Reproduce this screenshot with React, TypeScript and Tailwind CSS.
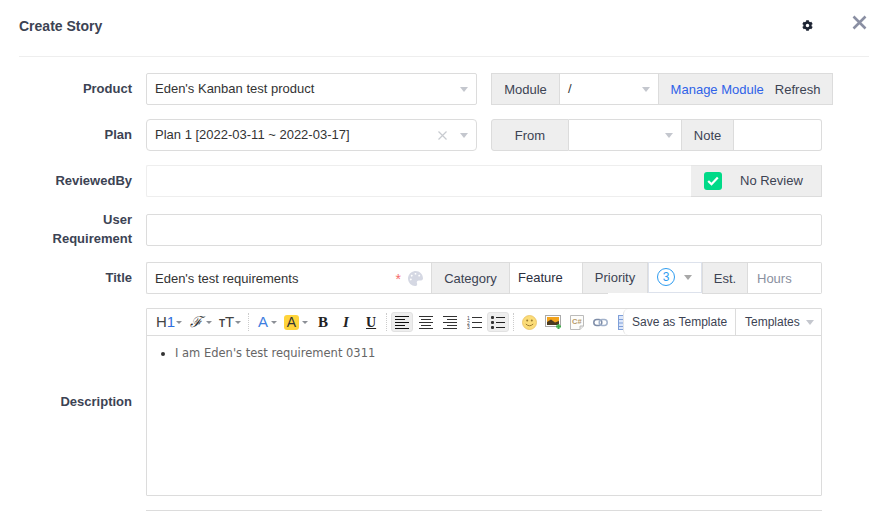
import React from "react";
import { FaCog, FaPalette } from "react-icons/fa";

function Caret({ className = "border-t-[#c4c7ce]" }: { className?: string }) {
  return <span className={"inline-block w-0 h-0 border-l-[4px] border-r-[4px] border-t-[5px] border-l-transparent border-r-transparent " + className} />;
}

function Mini() {
  return <span className="inline-block w-0 h-0 ml-[1px] mt-[1px] border-l-[3px] border-r-[3px] border-t-[3px] border-l-transparent border-r-transparent border-t-[#8b8f96]" />;
}

function Label({ children }: { children: React.ReactNode }) {
  return (
    <div className="w-[113px] mr-[14px] shrink-0 text-right font-bold text-[13px] leading-[19px] text-[#3c4353] pb-[2px]">
      {children}
    </div>
  );
}

function Addon({ className = "", children }: { className?: string; children: React.ReactNode }) {
  return (
    <div className={"flex items-center justify-center h-full pt-[2px] bg-[#eeeeee] border border-[#dcdcdc] text-[13px] text-[#3c4353] shrink-0 " + className}>
      {children}
    </div>
  );
}

function Row({ className = "", children }: { className?: string; children: React.ReactNode }) {
  return <div className={"flex items-center " + className}>{children}</div>;
}

function Lines({ kind }: { kind: "left" | "center" | "right" }) {
  const rows = [14, 10, 14, 10, 14];
  return (
    <svg width="14" height="13" viewBox="0 0 14 13">
      {rows.map((w, i) => {
        const x = kind === "left" ? 0 : kind === "center" ? (14 - w) / 2 : 14 - w;
        return <rect key={i} x={x} y={i * 3} width={w} height="1" fill={kind === "left" ? "#111" : "#333"} />;
      })}
    </svg>
  );
}

function Toolbar() {
  return (
    <div className="flex items-center h-[27px] border-b border-[#dcdcdc]">
      <div className="flex-1 min-w-0 h-full overflow-hidden flex items-center pl-[9px] text-[#444]">
        <div className="w-[34px] shrink-0 flex items-center text-[15px]">
          <span>H</span><span className="text-[#2f6fde]">1</span><Mini />
        </div>
        <div className="w-[29px] shrink-0 flex items-center">
          <span className="font-['Liberation_Serif',serif] italic text-[15px] text-[#333]">ℱ</span>
          <span className="ml-[3px] flex"><Mini /></span>
        </div>
        <div className="w-[29px] shrink-0 flex items-center font-bold text-[#444]">
          <span className="text-[10px] mt-[2px]">T</span><span className="text-[15px] font-normal">T</span><Mini />
        </div>
        <div className="w-px h-[18px] shrink-0 border-l border-dotted border-[#ccc]" />
        <div className="w-[26px] ml-[9px] shrink-0 flex items-center text-[15px] text-[#3d7ee0]">
          <span>A</span><span className="ml-[2px] flex"><Mini /></span>
        </div>
        <div className="w-[34px] shrink-0 flex items-center">
          <span className="w-[15px] h-[15px] shrink-0 rounded-[3px] bg-[#ffd43b] flex items-center justify-center text-[14px] text-[#333]">A</span>
          <span className="ml-[2px] flex"><Mini /></span>
        </div>
        <div className="w-[24px] shrink-0 font-['Liberation_Serif',serif] font-bold text-[15px] text-[#222]">B</div>
        <div className="w-[24px] shrink-0 pl-[1px] font-['Liberation_Serif',serif] font-bold italic text-[15px] text-[#222]">I</div>
        <div className="w-[19px] shrink-0 font-['Liberation_Serif',serif] font-bold underline text-[14px] text-[#222]">U</div>
        <div className="w-px h-[18px] ml-[1px] shrink-0 border-l border-dotted border-[#ccc]" />
        <div className="w-[22px] h-[20px] ml-[4px] shrink-0 flex items-center justify-center rounded-[3px] bg-[#eeeeee] border border-[#e2e2e2]">
          <Lines kind="left" />
        </div>
        <div className="w-[24px] ml-[1px] shrink-0 flex justify-center"><Lines kind="center" /></div>
        <div className="w-[24px] shrink-0 flex justify-center"><Lines kind="right" /></div>
        <div className="w-[25px] shrink-0 flex justify-center">
          <svg width="15" height="14" viewBox="0 0 15 14">
            <text x="0" y="4.5" fontSize="5" fontFamily="Liberation Sans" fill="#444">1</text>
            <text x="0" y="9.5" fontSize="5" fontFamily="Liberation Sans" fill="#444">2</text>
            <text x="0" y="14" fontSize="5" fontFamily="Liberation Sans" fill="#444">3</text>
            <rect x="5" y="2" width="10" height="1" fill="#333" /><rect x="5" y="7" width="10" height="1" fill="#333" /><rect x="5" y="12" width="10" height="1" fill="#333" />
          </svg>
        </div>
        <div className="w-[22px] h-[20px] shrink-0 flex items-center justify-center rounded-[3px] bg-[#eeeeee] border border-[#e2e2e2]">
          <svg width="14" height="14" viewBox="0 0 14 14">
            {[2, 7, 12].map((y) => (
              <g key={y}>
                <rect x="0" y={y - 1} width="3" height="3" rx="1" fill="#333" />
                <rect x="5" y={y} width="9" height="1" fill="#222" />
              </g>
            ))}
          </svg>
        </div>
        <div className="w-px h-[18px] ml-[4px] shrink-0 border-l border-dotted border-[#ccc]" />
        <div className="w-[23px] ml-[8px] shrink-0">
          <svg width="15" height="15" viewBox="0 0 15 15" className="block">
            <circle cx="7.5" cy="7.5" r="7" fill="#fbdc78" stroke="#e8c060" strokeWidth="0.8" />
            <circle cx="5.2" cy="5.5" r="1" fill="#9a7a30" /><circle cx="9.8" cy="5.5" r="1" fill="#9a7a30" />
            <path d="M3.8 9 Q7.5 12.5 11.2 9" stroke="#a07c30" strokeWidth="1" fill="none" />
          </svg>
        </div>
        <div className="w-[25px] shrink-0">
          <svg width="17" height="15" viewBox="0 0 17 15" className="block">
            <rect x="0.5" y="0.5" width="15" height="11" fill="#fff" stroke="#aaa" />
            <rect x="2" y="2" width="12" height="8" fill="#f2a31c" />
            <path d="M2 10 L2 7 L6 4.5 L10 7.5 L14 6 L14 10 Z" fill="#4b3a20" />
            <path d="M11 11.5 h5 M13.5 9 v5" stroke="#3fae49" strokeWidth="2" />
          </svg>
        </div>
        <div className="w-[23px] shrink-0">
          <svg width="14" height="15" viewBox="0 0 14 15" className="block">
            <path d="M0.5 0.5 H13.5 V11 L10 14.5 H0.5 Z" fill="#fdfdfb" stroke="#bbb" />
            <path d="M13.5 11 H10 V14.5" fill="#e8e8e8" stroke="#bbb" />
            <text x="2" y="9" fontSize="7.5" fontWeight="700" fontFamily="Liberation Sans" fill="#b79a68">C#</text>
          </svg>
        </div>
        <div className="w-[25px] shrink-0">
          <svg width="15" height="9" viewBox="0 0 15 9" className="block">
            <rect x="0.8" y="1.5" width="8" height="6" rx="3" fill="none" stroke="#7e8da8" strokeWidth="1.5" />
            <rect x="6.2" y="1.5" width="8" height="6" rx="3" fill="none" stroke="#a2b2cb" strokeWidth="1.5" />
          </svg>
        </div>
        <div className="w-[14px] shrink-0">
          <svg width="14" height="15" viewBox="0 0 14 15" className="block">
            <rect x="0.5" y="0.5" width="13" height="14" fill="#dce7fb" stroke="#7f9fd8" />
            <path d="M0 4.5 H14 M0 8 H14 M0 11.5 H14" stroke="#7f9fd8" />
          </svg>
        </div>
      </div>
      <div className="flex items-center h-full shrink-0 bg-white rounded-l-[5px] border-l border-[#e4e4e4] text-[12px] text-[#3c4353]">
        <div className="w-[111px] pl-[8px] whitespace-nowrap">Save as Template</div>
        <div className="w-[86px] h-full pl-[9px] border-l border-[#dcdcdc] flex items-center whitespace-nowrap">
          Templates<span className="ml-[6px] flex"><Caret /></span>
        </div>
      </div>
    </div>
  );
}

export default function App() {
  return (
    <div className="relative w-[873px] h-[511px] overflow-hidden bg-white font-['Liberation_Sans',Arial,sans-serif] text-[13px] text-[#333]">
      <header className="ml-[19px] w-[850px] h-[57px] border-b border-[#eeeeee] flex items-center pb-[3px]">
        <h1 className="font-bold text-[14px] text-[#3c4353]">Create Story</h1>
        <FaCog className="ml-auto mr-[56px] mt-[-2px] text-[#1d2433]" size={11} />
      </header>
      <button className="absolute left-[852px] top-[15px]" aria-label="Close">
        <svg width="15" height="15" viewBox="0 0 15 15" className="block">
          <path d="M1.5 1.5 L13.5 13.5 M13.5 1.5 L1.5 13.5" stroke="#8a8fa3" strokeWidth="2.6" />
        </svg>
      </button>

      <main className="pl-[19px] pt-[16px]">
        <Row className="h-[32px] mb-[14px]">
          <Label>Product</Label>
          <div className="w-[331px] h-full flex items-center justify-between pl-[8px] pr-[8px] border border-[#dcdcdc] rounded-[2px]">
            <span>Eden's Kanban test product</span><Caret />
          </div>
          <div className="ml-[14px] flex h-full">
            <Addon className="w-[69px]">Module</Addon>
            <div className="w-[98px] flex items-center justify-between pl-[8px] pr-[8px] border-y border-[#dcdcdc]">
              <span>/</span><Caret />
            </div>
            <Addon className="w-[175px] gap-[11px]">
              <span className="text-[#2f62e8]">Manage Module</span><span>Refresh</span>
            </Addon>
          </div>
        </Row>

        <Row className="h-[32px] mb-[14px]">
          <Label>Plan</Label>
          <div className="w-[331px] h-full flex items-center pl-[8px] pr-[8px] border border-[#dcdcdc] rounded-[4px]">
            <span className="flex-1">Plan 1 [2022-03-11 ~ 2022-03-17]</span>
            <svg width="9" height="9" viewBox="0 0 9 9" className="mr-[13px]"><path d="M0.5 0.5 L8.5 8.5 M8.5 0.5 L0.5 8.5" stroke="#c8cbd0" strokeWidth="1.2" /></svg>
            <Caret />
          </div>
          <div className="ml-[14px] w-[331px] flex h-full">
            <Addon className="w-[78px] rounded-l-[3px]">From</Addon>
            <div className="w-[112px] flex items-center justify-end pr-[8px] border-y border-[#dcdcdc]"><Caret /></div>
            <Addon className="w-[53px]">Note</Addon>
            <div className="flex-1 border-y border-r border-[#dcdcdc] rounded-r-[3px]" />
          </div>
        </Row>

        <Row className="h-[32px] mb-[17px]">
          <Label>ReviewedBy</Label>
          <div className="w-[676px] flex h-full">
            <div className="flex-1 border border-[#eeeeee] border-r-0 rounded-l-[2px]" />
            <Addon className="w-[131px] !justify-start !pt-0 pl-[12px] !border-l-0 !border-t-[#e6e6e6]">
              <span className="ml-[1px] w-[18px] h-[18px] rounded-[3px] bg-[#00da88] flex items-center justify-center">
                <svg width="12" height="10" viewBox="0 0 12 10"><path d="M1.2 5 L4.5 8.2 L10.8 1.5" stroke="#fff" strokeWidth="2.2" fill="none" /></svg>
              </span>
              <span className="ml-[18px]">No Review</span>
            </Addon>
          </div>
        </Row>

        <Row className="h-[32px] mb-[16px]">
          <Label>User<br />Requirement</Label>
          <div className="w-[676px] h-full border border-[#dcdcdc] rounded-[2px]" />
        </Row>

        <Row className="h-[32px] mb-[14px]">
          <Label>Title</Label>
          <div className="w-[676px] flex h-full">
            <div className="w-[285px] flex items-center pl-[8px] pr-[8px] pt-[2px] border-y border-l border-[#dcdcdc] rounded-l-[2px]">
              <span className="flex-1">Eden's test requirements</span>
              <span className="text-[#f56c6c] text-[14px] mr-[7px]">*</span>
              <FaPalette size={15} className="text-[#d5d8e3] -mt-[2px]" />
            </div>
            <Addon className="w-[79px]">Category</Addon>
            <div className="w-[72px] flex items-center pl-[8px] border-y border-[#e4e4e4] text-[#2c3040]">Feature</div>
            <div className="w-[66px] flex flex-col shrink-0">
              <Addon className="!h-[31px] !border-b-0 !pt-0">Priority</Addon>
              <div className="w-[26px] h-px bg-[#dcdcdc]" />
            </div>
            <div className="w-[54px] h-[31px] flex items-center pl-[8px] pb-[1px] border border-[#dde2ec]">
              <span className="w-[18px] h-[18px] rounded-full border border-[#2e9cf0] text-[#2e9cf0] flex items-center justify-center text-[12px]">3</span>
              <span className="ml-[9px] flex"><Caret className="border-t-[#a8a8a8]" /></span>
            </div>
            <Addon className="w-[46px]">Est.</Addon>
            <div className="flex-1 flex items-center pl-[9px] pt-[2px] border-y border-r border-[#dcdcdc] rounded-r-[2px] text-[#8a90a0]">Hours</div>
          </div>
        </Row>

        <Row className="mb-[14px]">
          <Label>Description</Label>
          <div className="w-[676px] h-[188px] border border-[#dcdcdc] rounded-[1px]">
            <Toolbar />
            <ul className="list-disc pl-[28px] pt-[9px] font-['DejaVu_Sans',sans-serif] text-[11.5px] leading-[16px] text-[#666]">
              <li className="marker:text-[#333]">I am Eden's test requirement 0311</li>
            </ul>
          </div>
        </Row>

        <Row className="h-[32px]">
          <Label>{""}</Label>
          <div className="w-[676px] h-full border border-[#dcdcdc]" />
        </Row>
      </main>
    </div>
  );
}
